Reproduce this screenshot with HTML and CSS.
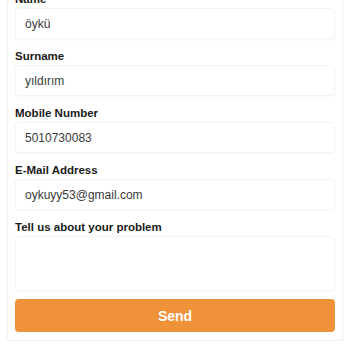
FILE: index.html
```html
<!DOCTYPE html>
<html>
<head>
<meta charset="utf-8">
<link rel="stylesheet" href="styles.css">
</head>
<body>
<div class="card">
  <form class="form">
    <label class="label">Name</label>
    <div class="field">öykü</div>
    <label class="label">Surname</label>
    <div class="field">yıldırım</div>
    <label class="label">Mobile Number</label>
    <div class="field">5010730083</div>
    <label class="label">E-Mail Address</label>
    <div class="field">oykuyy53@gmail.com</div>
    <label class="label">Tell us about your problem</label>
    <div class="field area"></div>
    <button type="button" class="send">Send</button>
  </form>
</div>
</body>
</html>
```
FILE: styles.css
```css
html, body {
  margin: 0;
  padding: 0;
  background: #ffffff;
  font-family: "Liberation Sans", Arial, sans-serif;
  overflow: hidden;
}
.card {
  margin: -10px 7px 0 7px;
  padding: 0 7px 8px 7px;
  background: #ffffff;
  border: 1px solid #f2f2f2;
  border-top: none;
  box-shadow: 0 1px 3px rgba(0,0,0,0.03);
}
.form {
  display: flex;
  flex-direction: column;
}
.label {
  height: 18px;
  line-height: 18px;
  font-size: 11.5px;
  font-weight: bold;
  color: #1a1a1a;
}
.field {
  height: 31px;
  box-sizing: border-box;
  line-height: 30px;
  padding-left: 9px;
  font-size: 12px;
  color: #3a3a3a;
  border: 1px solid #f4f4f4;
  border-radius: 3px;
  box-shadow: 0 1px 2px rgba(0,0,0,0.03);
  margin-bottom: 8px;
}
.field.area {
  height: 55px;
}
.send {
  height: 33px;
  border: none;
  border-radius: 4px;
  background: #f0923a;
  color: #ffffff;
  font-family: "Liberation Sans", Arial, sans-serif;
  font-size: 14px;
  font-weight: bold;
  cursor: pointer;
}
```
